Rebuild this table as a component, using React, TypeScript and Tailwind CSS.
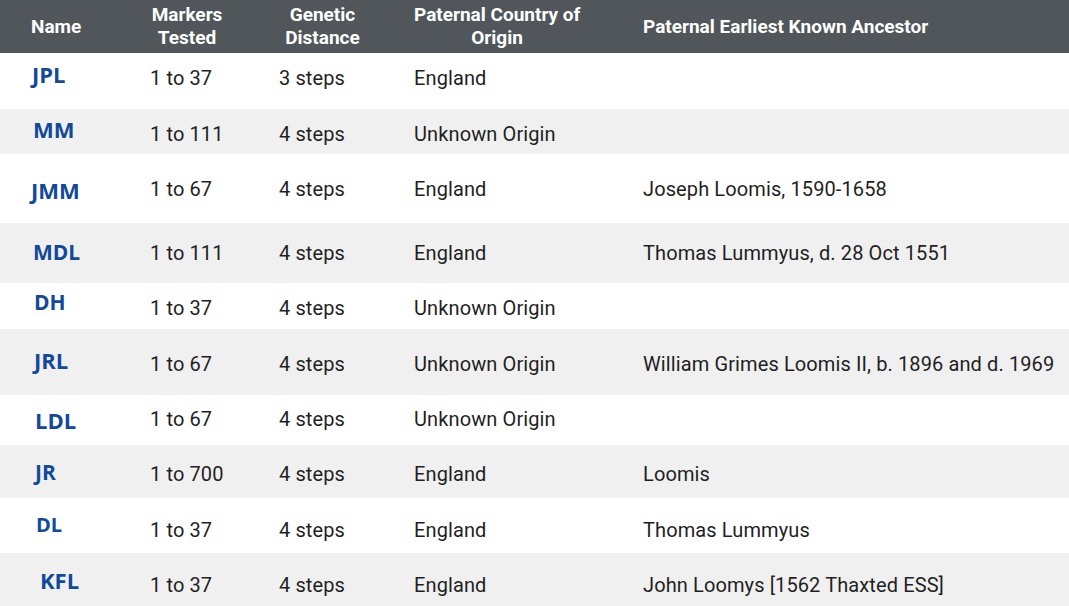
type Row = {
  name: string;
  markers: string;
  distance: string;
  country: string;
  ancestor: string;
  row: string;
  nameCls: string;
  textCls: string;
};

const rows: Row[] = [
  { name: "JPL", markers: "1 to 37", distance: "3 steps", country: "England", ancestor: "", row: "h-[56px] bg-white", nameCls: "pl-[32px] pt-[10px] text-[22px]", textCls: "pt-[13px]" },
  { name: "MM", markers: "1 to 111", distance: "4 steps", country: "Unknown Origin", ancestor: "", row: "h-[45px] bg-[#f0f0f0]", nameCls: "pl-[33px] pt-[9px] text-[22px]", textCls: "pt-[13px]" },
  { name: "JMM", markers: "1 to 67", distance: "4 steps", country: "England", ancestor: "Joseph Loomis, 1590-1658", row: "h-[69px] bg-white", nameCls: "pl-[31px] pt-[25px] text-[22px]", textCls: "pt-[23px]" },
  { name: "MDL", markers: "1 to 111", distance: "4 steps", country: "England", ancestor: "Thomas Lummyus, d. 28 Oct 1551", row: "h-[60px] bg-[#f0f0f0]", nameCls: "pl-[33px] pt-[19px] text-[21px]", textCls: "pt-[18px]" },
  { name: "DH", markers: "1 to 37", distance: "4 steps", country: "Unknown Origin", ancestor: "", row: "h-[46px] bg-white", nameCls: "pl-[34px] pt-[9px] text-[21px]", textCls: "pt-[13px]" },
  { name: "JRL", markers: "1 to 67", distance: "4 steps", country: "Unknown Origin", ancestor: "William Grimes Loomis II, b. 1896 and d. 1969", row: "h-[66px] bg-[#f0f0f0]", nameCls: "pl-[34px] pt-[20px] text-[22px]", textCls: "pt-[23px]" },
  { name: "LDL", markers: "1 to 67", distance: "4 steps", country: "Unknown Origin", ancestor: "", row: "h-[50px] bg-white", nameCls: "pl-[35px] pt-[14px] text-[22px]", textCls: "pt-[12px]" },
  { name: "JR", markers: "1 to 700", distance: "4 steps", country: "England", ancestor: "Loomis", row: "h-[53px] bg-[#f0f0f0]", nameCls: "pl-[35px] pt-[17px] text-[21px]", textCls: "pt-[17px]" },
  { name: "DL", markers: "1 to 37", distance: "4 steps", country: "England", ancestor: "Thomas Lummyus", row: "h-[55px] bg-white", nameCls: "pl-[36px] pt-[17px] text-[20px]", textCls: "pt-[20px]" },
  { name: "KFL", markers: "1 to 37", distance: "4 steps", country: "England", ancestor: "John Loomys [1562 Thaxted ESS]", row: "h-[60px] bg-[#f0f0f0]", nameCls: "pl-[40px] pt-[16px] text-[22px]", textCls: "pt-[20px]" },
];

const cols = "grid grid-cols-[150px_129px_135px_229px_1fr]";

export default function App() {
  return (
    <div className="h-[606px] w-[1069px] overflow-hidden bg-white font-['Roboto',sans-serif]">
      <div className={`${cols} h-[53px] items-center bg-[#505659] text-[19px] font-bold leading-[23px] text-white`}>
        <div className="pl-[31px]">Name</div>
        <div className="-mt-[1px] w-[74px] text-center">
          Markers
          <br />
          Tested
        </div>
        <div className="-mt-[1px] w-[87px] text-center">
          Genetic
          <br />
          Distance
        </div>
        <div className="-mt-[1px] w-[166px] whitespace-nowrap text-center">
          Paternal Country of
          <br />
          Origin
        </div>
        <div className="whitespace-nowrap">Paternal Earliest Known Ancestor</div>
      </div>
      {rows.map((r) => (
        <div key={r.name} className={`${cols} ${r.row} text-[20px] leading-[24px] tracking-[0.11px] text-[#1f1f1f]`}>
          <div className={`${r.nameCls} font-['Open_Sans',sans-serif] font-bold leading-none tracking-normal text-[#124a99]`}>{r.name}</div>
          <div className={r.textCls}>{r.markers}</div>
          <div className={r.textCls}>{r.distance}</div>
          <div className={r.textCls}>{r.country}</div>
          <div className={`${r.textCls} whitespace-nowrap`}>{r.ancestor}</div>
        </div>
      ))}
    </div>
  );
}
